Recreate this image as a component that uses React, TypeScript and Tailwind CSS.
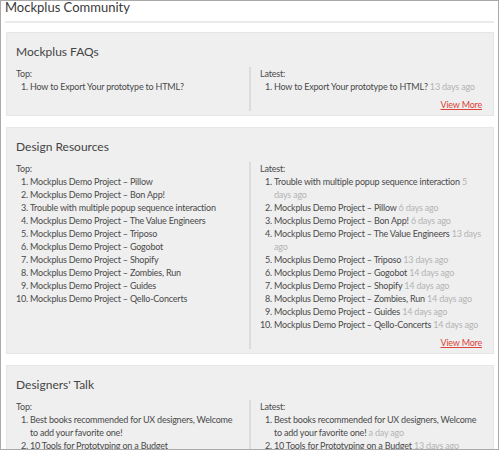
import React from 'react';

interface Post {
  title: string;
  ago?: string;
}

interface Section {
  name: string;
  top: Post[];
  latest: Post[];
}

const SECTIONS: Section[] = [
  {
    name: 'Mockplus FAQs',
    top: [{ title: 'How to Export Your prototype to HTML?' }],
    latest: [{ title: 'How to Export Your prototype to HTML?', ago: '13 days ago' }],
  },
  {
    name: 'Design Resources',
    top: [
      { title: 'Mockplus Demo Project – Pillow' },
      { title: 'Mockplus Demo Project – Bon App!' },
      { title: 'Trouble with multiple popup sequence interaction' },
      { title: 'Mockplus Demo Project – The Value Engineers' },
      { title: 'Mockplus Demo Project – Triposo' },
      { title: 'Mockplus Demo Project – Gogobot' },
      { title: 'Mockplus Demo Project – Shopify' },
      { title: 'Mockplus Demo Project – Zombies, Run' },
      { title: 'Mockplus Demo Project – Guides' },
      { title: 'Mockplus Demo Project – Qello-Concerts' },
    ],
    latest: [
      { title: 'Trouble with multiple popup sequence interaction', ago: '5 days ago' },
      { title: 'Mockplus Demo Project – Pillow', ago: '6 days ago' },
      { title: 'Mockplus Demo Project – Bon App!', ago: '6 days ago' },
      { title: 'Mockplus Demo Project – The Value Engineers', ago: '13 days ago' },
      { title: 'Mockplus Demo Project – Triposo', ago: '13 days ago' },
      { title: 'Mockplus Demo Project – Gogobot', ago: '14 days ago' },
      { title: 'Mockplus Demo Project – Shopify', ago: '14 days ago' },
      { title: 'Mockplus Demo Project – Zombies, Run', ago: '14 days ago' },
      { title: 'Mockplus Demo Project – Guides', ago: '14 days ago' },
      { title: 'Mockplus Demo Project – Qello-Concerts', ago: '14 days ago' },
    ],
  },
  {
    name: "Designers' Talk",
    top: [
      { title: 'Best books recommended for UX designers, Welcome to add your favorite one!' },
      { title: '10 Tools for Prototyping on a Budget' },
      { title: 'How to Export Your prototype to HTML?' },
    ],
    latest: [
      { title: 'Best books recommended for UX designers, Welcome to add your favorite one!', ago: 'a day ago' },
      { title: '10 Tools for Prototyping on a Budget', ago: '13 days ago' },
      { title: 'How to Export Your prototype to HTML?', ago: '13 days ago' },
    ],
  },
];

const PostList: React.FC<{ posts: Post[] }> = ({ posts }) => (
  <ol className="list-decimal pl-[14px]">
    {posts.map((post, i) => (
      <li key={i}>
        {post.title}
        {post.ago && <span className="text-[#b4b4b4]"> {post.ago}</span>}
      </li>
    ))}
  </ol>
);

const SectionCard: React.FC<{ section: Section }> = ({ section }) => (
  <div className="bg-[#efefef] border border-[#e6e6e6] pt-[11px] pb-[4px] pl-[9px] pr-[11px] mb-[11px]">
    <h2 className="text-[12px] leading-4 text-[#444] mb-[7px]">{section.name}</h2>
    <div className="grid grid-cols-2 text-[9px] leading-[13px] tracking-[-0.2px] text-[#4a4a4a]">
      <div className="pr-[8px]">
        <div>Top:</div>
        <PostList posts={section.top} />
      </div>
      <div className="border-l-2 border-[#dcdcdc] pl-[9px]">
        <div>Latest:</div>
        <PostList posts={section.latest} />
        <div className="flex justify-end mt-[5px]">
          <a href="#" className="text-[#d9453a] underline">View More</a>
        </div>
      </div>
    </div>
  </div>
);

export default function App() {
  return (
    <div
      className="w-[499px] h-[450px] overflow-hidden bg-white border border-[#aaaaaa] px-[4px]"
      style={{ fontFamily: 'Lato, "Open Sans", sans-serif' }}
    >
      <h1 className="text-[13px] leading-[16px] text-[#3a3a3a] -mt-[2px] pb-[6px] border-b-2 border-[#ebebeb] mb-[9px]">
        Mockplus Community
      </h1>
      <div className="pl-[1px]">
        {SECTIONS.map((s) => (
          <SectionCard key={s.name} section={s} />
        ))}
      </div>
    </div>
  );
}
